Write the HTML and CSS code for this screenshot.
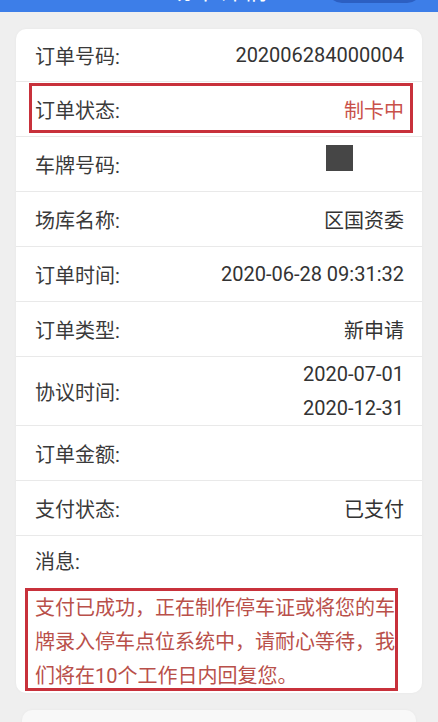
FILE: index.html
```html
<!DOCTYPE html>
<html lang="zh-CN">
<head>
    <meta charset="UTF-8">
    <meta name="viewport" content="width=device-width, initial-scale=1.0">
    <title>场卡详情</title>
    <link rel="stylesheet" href="styles.css">
</head>
<body>
    <div class="topbar">
        <span></span>
        <h1 class="title">场卡详情</h1>
        <button class="top-btn" type="button"></button>
    </div>

    <div class="page">
        <div class="card">
            <div class="row">
                <span class="label">订单号码:</span>
                <span class="value">202006284000004</span>
            </div>
            <div class="row marked">
                <span class="label">订单状态:</span>
                <span class="value status">制卡中</span>
                <span class="mark mark-row"></span>
            </div>
            <div class="row">
                <span class="label">车牌号码:</span>
                <span class="plate"></span>
            </div>
            <div class="row">
                <span class="label">场库名称:</span>
                <span class="value">区国资委</span>
            </div>
            <div class="row">
                <span class="label">订单时间:</span>
                <span class="value">2020-06-28 09:31:32</span>
            </div>
            <div class="row">
                <span class="label">订单类型:</span>
                <span class="value">新申请</span>
            </div>
            <div class="row tall">
                <span class="label">协议时间:</span>
                <span class="value dates">
                    <span>2020-07-01</span>
                    <span>2020-12-31</span>
                </span>
            </div>
            <div class="row">
                <span class="label">订单金额:</span>
                <span class="value"></span>
            </div>
            <div class="row">
                <span class="label">支付状态:</span>
                <span class="value">已支付</span>
            </div>

            <div class="msg-label">消息:</div>
            <div class="message">
                支付已成功，正在制作停车证或将您的车牌录入停车点位系统中，请耐心等待，我们将在10个工作日内回复您。
                <span class="mark mark-msg"></span>
            </div>
        </div>

        <div class="card next-card"></div>
    </div>
</body>
</html>
```

FILE: styles.css
```css
body {
    margin: 0;
    padding: 0;
    background-color: #efefef;
    font-family: Roboto, "Noto Sans CJK SC", sans-serif;
    color: #333;
    overflow: hidden;
}

/* header, mostly scrolled out of view */
.topbar {
    height: 12px;
    background-color: #3d7ee8;
    display: grid;
    grid-template-columns: 1fr auto 1fr;
    align-content: end;
    align-items: end;
    overflow: hidden;
}

.title {
    margin: 0 0 9px 0;
    font-size: 24px;
    line-height: 24px;
    font-weight: normal;
    color: #fff;
    letter-spacing: 1px;
}

.top-btn {
    justify-self: end;
    width: 95px;
    height: 30px;
    margin: 0 16px 9px 0;
    border: none;
    border-radius: 15px;
    background-color: #2c5fc2;
}

.page {
    padding: 17px 16px 0 16px;
}

.card {
    background-color: #fff;
    border-radius: 10px;
    box-shadow: 0 0 3px rgba(0, 0, 0, 0.04);
}

.row {
    position: relative;
    display: flex;
    justify-content: space-between;
    align-items: center;
    height: 54px;
    padding: 0 18px 0 19px;
    border-bottom: 1px solid #e9e9e9;
    font-size: 20px;
}

.row:first-child {
    height: 52px;
}

.row.tall {
    height: 68px;
}

.label {
    color: #3a3a3a;
}

.value {
    color: #333;
}

.status {
    color: #c9514a;
}

.dates {
    display: flex;
    flex-direction: column;
    align-items: flex-end;
    line-height: 34px;
}

.plate {
    width: 27px;
    height: 26px;
    margin: 0 51px 13px 0;
    background-color: #464646;
}

.msg-label {
    padding: 9px 19px 0 19px;
    font-size: 20px;
    line-height: 34px;
    color: #3a3a3a;
}

.message {
    position: relative;
    margin-top: 12px;
    padding: 0 18px 0 19px;
    font-size: 20px;
    line-height: 34px;
    color: #b9504a;
}

/* red annotation frames */
.mark {
    position: absolute;
    border: 3px solid #c8313b;
    pointer-events: none;
}

.mark-row {
    top: 1px;
    bottom: 3px;
    left: 13px;
    right: 9px;
}

.mark-msg {
    top: -3px;
    bottom: 2px;
    left: 9px;
    right: 24px;
}

.next-card {
    height: 60px;
    margin: 17px 6px 0 6px;
    background-color: #f8f8f8;
}
```
